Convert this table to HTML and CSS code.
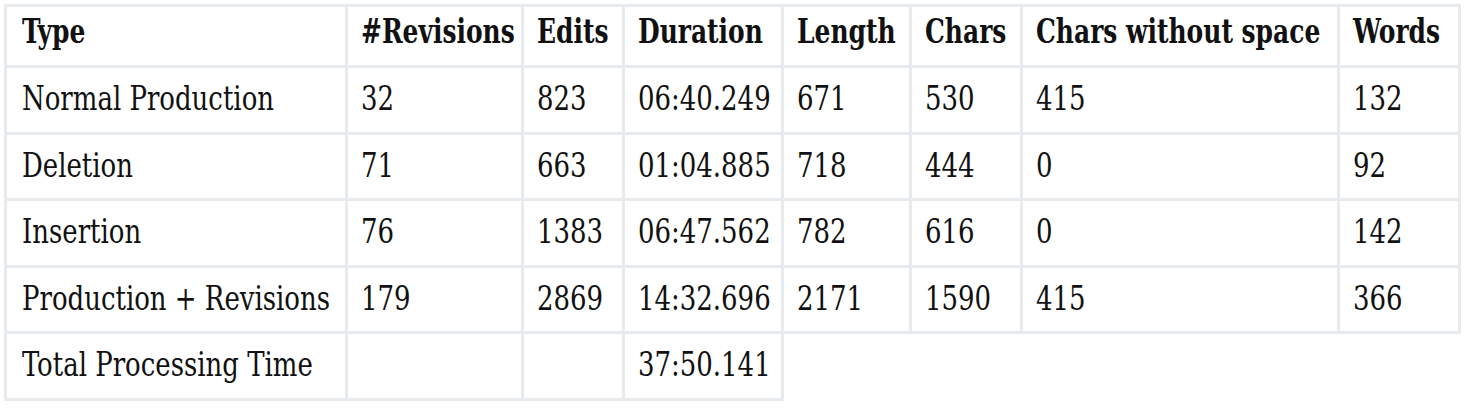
FILE: index.html
```html
<!DOCTYPE html>
<html>
<head>
<meta charset="utf-8">
<link rel="stylesheet" href="styles.css">
</head>
<body>
<table class="stats">
  <colgroup>
    <col class="c-type"><col class="c-rev"><col class="c-edits"><col class="c-dur"><col class="c-len"><col class="c-chars"><col class="c-nospace"><col class="c-words">
  </colgroup>
  <thead>
    <tr><th><span class="t">Type</span></th><th><span class="t">#Revisions</span></th><th><span class="t">Edits</span></th><th><span class="t">Duration</span></th><th><span class="t">Length</span></th><th><span class="t">Chars</span></th><th><span class="t">Chars without space</span></th><th><span class="t">Words</span></th></tr>
  </thead>
  <tbody>
    <tr><td><span class="t">Normal Production</span></td><td><span class="t">32</span></td><td><span class="t">823</span></td><td><span class="t">06:40.249</span></td><td><span class="t">671</span></td><td><span class="t">530</span></td><td><span class="t">415</span></td><td><span class="t">132</span></td></tr>
    <tr><td><span class="t">Deletion</span></td><td><span class="t">71</span></td><td><span class="t">663</span></td><td><span class="t">01:04.885</span></td><td><span class="t">718</span></td><td><span class="t">444</span></td><td><span class="t">0</span></td><td><span class="t">92</span></td></tr>
    <tr><td><span class="t">Insertion</span></td><td><span class="t">76</span></td><td><span class="t">1383</span></td><td><span class="t">06:47.562</span></td><td><span class="t">782</span></td><td><span class="t">616</span></td><td><span class="t">0</span></td><td><span class="t">142</span></td></tr>
    <tr><td><span class="t">Production + Revisions</span></td><td><span class="t">179</span></td><td><span class="t">2869</span></td><td><span class="t">14:32.696</span></td><td><span class="t">2171</span></td><td><span class="t">1590</span></td><td><span class="t">415</span></td><td><span class="t">366</span></td></tr>
    <tr><td><span class="t">Total Processing Time</span></td><td></td><td></td><td><span class="t">37:50.141</span></td></tr>
  </tbody>
</table>
</body>
</html>
```
FILE: styles.css
```css
html, body {
  margin: 0;
  padding: 0;
  background: #ffffff;
}
body {
  padding: 4px 0 0 4px;
  font-family: "DejaVu Serif Condensed", "DejaVu Serif", serif;
  font-stretch: condensed;
  color: #111111;
}
.stats {
  border-collapse: collapse;
  table-layout: fixed;
  width: 1456px;
}
.stats th,
.stats td {
  border: 3px solid #e7ebee;
  padding: 14px 12px 16.5px 13px;
  font-size: 33px;
  line-height: 33px;
  text-align: left;
  vertical-align: top;
  white-space: nowrap;
  overflow: visible;
}
.stats th:first-child,
.stats td:first-child {
  padding-left: 15px;
}
.stats th {
  font-weight: bold;
  padding-top: 8px;
  padding-bottom: 17px;
}
.stats td {
  font-weight: normal;
}
.t {
  display: inline-block;
  transform: scaleX(0.875);
  transform-origin: 0 50%;
}
.stats th .t {
  transform: scaleX(0.84);
}
.c-type { width: 341px; }
.c-rev { width: 176px; }
.c-edits { width: 101px; }
.c-dur { width: 159px; }
.c-len { width: 128px; }
.c-chars { width: 111px; }
.c-nospace { width: 317px; }
.c-words { width: 121px; }
```
